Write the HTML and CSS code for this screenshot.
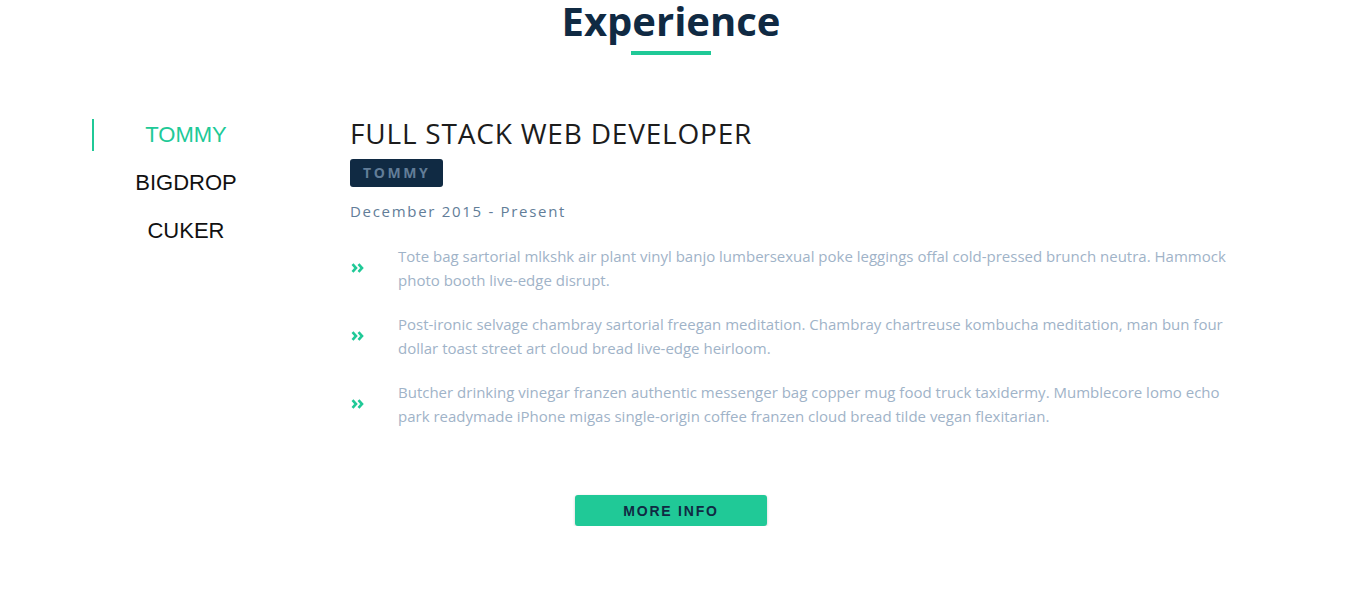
FILE: index.html
```html
<!DOCTYPE html>
<html lang="en">
<head>
<meta charset="utf-8">
<title>Experience</title>
<link rel="stylesheet" href="styles.css">
</head>
<body>
<section class="experience">
  <header class="section-head">
    <h2 class="section-title">Experience</h2>
    <div class="underline"></div>
  </header>
  <div class="jobs">
    <div class="tabs">
      <button class="tab active">TOMMY</button>
      <button class="tab">BIGDROP</button>
      <button class="tab">CUKER</button>
    </div>
    <article class="job">
      <h3 class="job-title">FULL STACK WEB DEVELOPER</h3>
      <span class="badge">TOMMY</span>
      <p class="job-date">December 2015 - Present</p>
      <div class="duty">
        <svg class="chev" viewBox="0 0 13 10" width="13" height="10"><path d="M1.5 1.2 L5 5 L1.5 8.8 M7.5 1.2 L11 5 L7.5 8.8" fill="none" stroke="#20c997" stroke-width="2.6"/></svg>
        <p>Tote bag sartorial mlkshk air plant vinyl banjo lumbersexual poke leggings offal cold-pressed brunch neutra. Hammock photo booth live-edge disrupt.</p>
      </div>
      <div class="duty">
        <svg class="chev" viewBox="0 0 13 10" width="13" height="10"><path d="M1.5 1.2 L5 5 L1.5 8.8 M7.5 1.2 L11 5 L7.5 8.8" fill="none" stroke="#20c997" stroke-width="2.6"/></svg>
        <p>Post-ironic selvage chambray sartorial freegan meditation. Chambray chartreuse kombucha meditation, man bun four dollar toast street art cloud bread live-edge heirloom.</p>
      </div>
      <div class="duty">
        <svg class="chev" viewBox="0 0 13 10" width="13" height="10"><path d="M1.5 1.2 L5 5 L1.5 8.8 M7.5 1.2 L11 5 L7.5 8.8" fill="none" stroke="#20c997" stroke-width="2.6"/></svg>
        <p>Butcher drinking vinegar franzen authentic messenger bag copper mug food truck taxidermy. Mumblecore lomo echo park readymade iPhone migas single-origin coffee franzen cloud bread tilde vegan flexitarian.</p>
      </div>
    </article>
  </div>
  <div class="actions">
    <button class="more-btn">MORE INFO</button>
  </div>
</section>
</body>
</html>
```

FILE: styles.css
```css
* { box-sizing: border-box; }

body {
  margin: 0;
  background: #ffffff;
  font-family: "Open Sans", "Noto Sans", sans-serif;
}

.experience {
  width: 1342px;
}

.section-head {
  display: flex;
  flex-direction: column;
  align-items: center;
}

.section-title {
  margin: 0;
  font-size: 40px;
  line-height: 41px;
  font-weight: 700;
  color: #102a43;
}

.underline {
  width: 80px;
  height: 4px;
  margin-top: 10px;
  background: #20c997;
}

.jobs {
  display: flex;
  gap: 72px;
  margin: 64px 0 0 92px;
  width: 1158px;
}

.tabs {
  width: 186px;
  flex: none;
  display: flex;
  flex-direction: column;
  gap: 16px;
}

.tab {
  height: 32px;
  padding: 0;
  border: 0;
  border-left: 2px solid transparent;
  background: transparent;
  font-family: "Liberation Sans", Arial, sans-serif;
  font-size: 22px;
  line-height: 32px;
  color: #111111;
  text-align: center;
  cursor: pointer;
}

.tab.active {
  border-left-color: #20c997;
  color: #20c997;
}

.job {
  flex: 1;
}

.job-title {
  margin: 0;
  font-size: 28px;
  line-height: 28px;
  font-weight: 400;
  letter-spacing: 0.8px;
  color: #1c1c1c;
}

.badge {
  display: inline-block;
  margin-top: 12px;
  height: 28px;
  padding: 0 13px;
  border-radius: 3px;
  background: #102a43;
  color: #627d98;
  font-size: 14px;
  line-height: 28px;
  font-weight: 700;
  letter-spacing: 2.6px;
}

.job-date {
  margin: 12px 0 0;
  font-size: 15px;
  line-height: 24px;
  letter-spacing: 1.7px;
  color: #627d98;
}

.duty {
  display: flex;
  align-items: center;
  gap: 34px;
  margin-top: 20px;
}

.job-date + .duty {
  margin-top: 21px;
}

.chev {
  flex: none;
  margin-left: 1px;
}

.duty p {
  margin: 0;
  font-size: 15px;
  line-height: 24px;
  color: #9fb3c8;
}

.actions {
  display: flex;
  justify-content: center;
  margin-top: 67px;
}

.more-btn {
  width: 192px;
  height: 31px;
  border: 0;
  border-radius: 3px;
  background: #20c997;
  box-shadow: 0 1px 3px rgba(0, 0, 0, 0.2);
  font-family: "Liberation Sans", Arial, sans-serif;
  font-size: 14px;
  font-weight: 700;
  letter-spacing: 1.8px;
  color: #102a43;
  cursor: pointer;
}
```
